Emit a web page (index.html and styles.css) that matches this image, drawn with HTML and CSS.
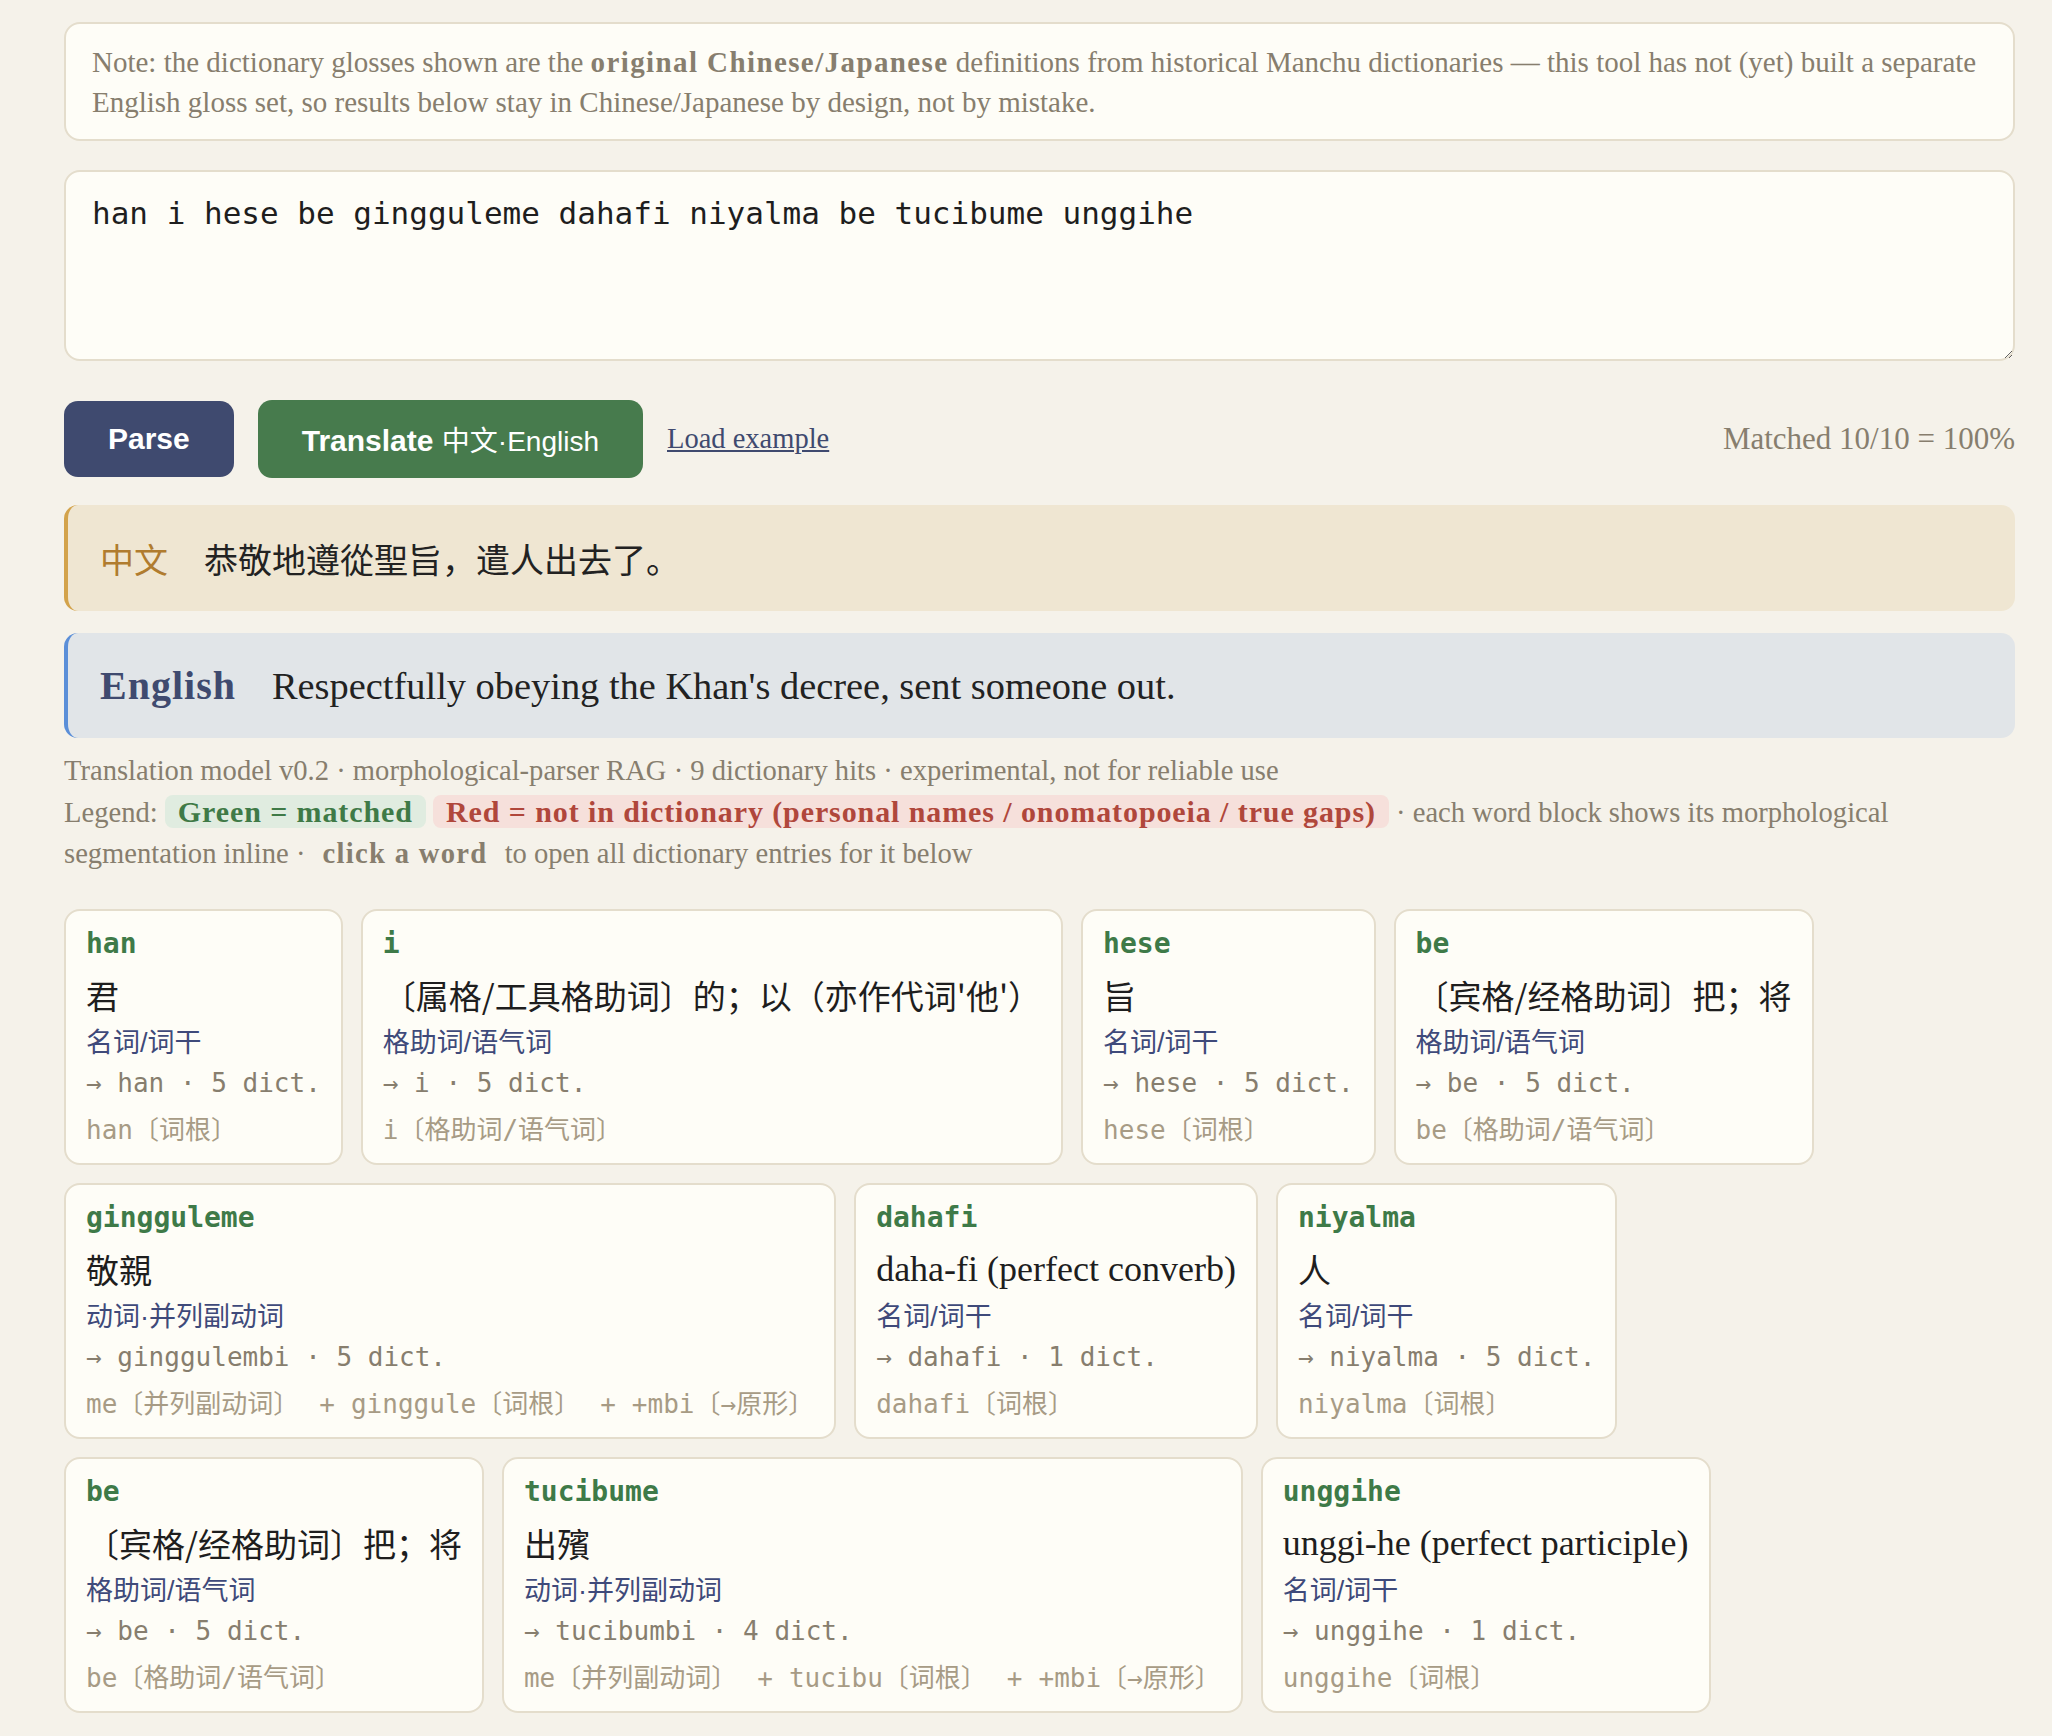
FILE: index.html
```html
<!DOCTYPE html>
<html lang="en">
<head>
	<meta charset="UTF-8">
	<title>Manchu parser</title>
	<link rel="stylesheet" href="styles.css">
</head>
<body>
	<div class="page">
		<div class="note">Note: the dictionary glosses shown are the <b>original Chinese/Japanese</b> definitions from historical Manchu dictionaries — this tool has not (yet) built a separate English gloss set, so results below stay in Chinese/Japanese by design, not by mistake.</div>
		<textarea class="input" spellcheck="false">han i hese be gingguleme dahafi niyalma be tucibume unggihe</textarea>
		<div class="actions">
			<button class="btn btn-parse">Parse</button>
			<button class="btn btn-translate">Translate <span class="sub">中文·English</span></button>
			<a href="#" class="load">Load example</a>
			<span class="matched">Matched 10/10 = 100%</span>
		</div>
		<div class="result result-zh"><span class="label">中文</span><span class="text">恭敬地遵從聖旨，遣人出去了。</span></div>
		<div class="result result-en"><span class="label">English</span><span class="text">Respectfully obeying the Khan's decree, sent someone out.</span></div>
		<div class="meta">Translation model v0.2 · morphological-parser RAG · 9 dictionary hits · experimental, not for reliable use</div>
		<div class="meta">Legend: <span class="pill pill-ok">Green = matched</span> <span class="pill pill-miss">Red = not in dictionary (personal names / onomatopoeia / true gaps)</span> · each word block shows its morphological segmentation inline · <b class="hint">click a word</b> to open all dictionary entries for it below</div>

		<div class="words">
			<div class="word">
				<div class="form">han</div>
				<div class="gloss zh">君</div>
				<div class="pos">名词/词干</div>
				<div class="lemma">→ han · 5 dict.</div>
				<div class="segs"><span class="seg">han〔词根〕</span></div>
			</div>
			<div class="word">
				<div class="form">i</div>
				<div class="gloss zh">〔属格/工具格助词〕的；以（亦作代词'他'）</div>
				<div class="pos">格助词/语气词</div>
				<div class="lemma">→ i · 5 dict.</div>
				<div class="segs"><span class="seg">i〔格助词/语气词〕</span></div>
			</div>
			<div class="word">
				<div class="form">hese</div>
				<div class="gloss zh">旨</div>
				<div class="pos">名词/词干</div>
				<div class="lemma">→ hese · 5 dict.</div>
				<div class="segs"><span class="seg">hese〔词根〕</span></div>
			</div>
			<div class="word">
				<div class="form">be</div>
				<div class="gloss zh">〔宾格/经格助词〕把；将</div>
				<div class="pos">格助词/语气词</div>
				<div class="lemma">→ be · 5 dict.</div>
				<div class="segs"><span class="seg">be〔格助词/语气词〕</span></div>
			</div>
			<div class="word">
				<div class="form">gingguleme</div>
				<div class="gloss zh">敬親</div>
				<div class="pos">动词·并列副动词</div>
				<div class="lemma">→ ginggulembi · 5 dict.</div>
				<div class="segs"><span class="seg">me〔并列副动词〕</span><span class="plus">+</span><span class="seg">ginggule〔词根〕</span><span class="plus">+</span><span class="seg">+mbi〔→原形〕</span></div>
			</div>
			<div class="word">
				<div class="form">dahafi</div>
				<div class="gloss">daha-fi (perfect converb)</div>
				<div class="pos">名词/词干</div>
				<div class="lemma">→ dahafi · 1 dict.</div>
				<div class="segs"><span class="seg">dahafi〔词根〕</span></div>
			</div>
			<div class="word">
				<div class="form">niyalma</div>
				<div class="gloss zh">人</div>
				<div class="pos">名词/词干</div>
				<div class="lemma">→ niyalma · 5 dict.</div>
				<div class="segs"><span class="seg">niyalma〔词根〕</span></div>
			</div>
			<div class="word">
				<div class="form">be</div>
				<div class="gloss zh">〔宾格/经格助词〕把；将</div>
				<div class="pos">格助词/语气词</div>
				<div class="lemma">→ be · 5 dict.</div>
				<div class="segs"><span class="seg">be〔格助词/语气词〕</span></div>
			</div>
			<div class="word">
				<div class="form">tucibume</div>
				<div class="gloss zh">出殯</div>
				<div class="pos">动词·并列副动词</div>
				<div class="lemma">→ tucibumbi · 4 dict.</div>
				<div class="segs"><span class="seg">me〔并列副动词〕</span><span class="plus">+</span><span class="seg">tucibu〔词根〕</span><span class="plus">+</span><span class="seg">+mbi〔→原形〕</span></div>
			</div>
			<div class="word">
				<div class="form">unggihe</div>
				<div class="gloss">unggi-he (perfect participle)</div>
				<div class="pos">名词/词干</div>
				<div class="lemma">→ unggihe · 1 dict.</div>
				<div class="segs"><span class="seg">unggihe〔词根〕</span></div>
			</div>
		</div>
	</div>
</body>
</html>
```

FILE: styles.css
```css
* {
	margin: 0;
	padding: 0;
	box-sizing: border-box;
}
body {
	background-color: #f5f2ea;
	font-family: "Liberation Serif", "Noto Sans CJK SC", serif;
	color: #222;
}
.page {
	padding: 22px 37px 26px 64px;
}
.note {
	background-color: #fefdf7;
	border: 2px solid #e4ddcc;
	border-radius: 16px;
	padding: 18px 26px 17px;
	font-size: 29px;
	line-height: 40px;
	color: #877e6e;
}
.note b {
	letter-spacing: 1.4px;
}
.input {
	display: block;
	width: 100%;
	height: 191px;
	margin-top: 29px;
	padding: 18px 26px;
	background-color: #fefdf7;
	border: 2px solid #e4ddcc;
	border-radius: 16px;
	font-family: "DejaVu Sans Mono", monospace;
	font-size: 31px;
	line-height: 1.5;
	color: #1e1e1e;
	outline: none;
}
.actions {
	display: flex;
	align-items: center;
	gap: 24px;
	margin-top: 39px;
}
.btn {
	height: 76px;
	padding: 0 44px;
	border: none;
	border-radius: 14px;
	color: #fff;
	font-family: "Liberation Sans", "Noto Sans CJK SC", sans-serif;
	font-size: 30px;
	font-weight: bold;
}
.btn-parse {
	background-color: #3f4a6f;
}
.btn-translate {
	background-color: #477b4d;
	height: 78px;
}
.btn .sub {
	font-size: 28px;
	font-weight: normal;
}
.load {
	color: #3f4a6f;
	font-size: 28.5px;
	text-decoration: underline;
}
.matched {
	margin-left: auto;
	color: #877e6e;
	font-size: 31px;
}
.result {
	display: flex;
	align-items: center;
	gap: 36px;
	border-radius: 14px;
	padding: 0 32px;
}
.result-zh {
	height: 106px;
	margin-top: 27px;
	background-color: #efe6d2;
	border-left: 4px solid #d3a34b;
	font-size: 34px;
}
.result-zh .label {
	color: #b07c2f;
}
.result-en {
	height: 105px;
	margin-top: 22px;
	background-color: #e1e5e8;
	border-left: 4px solid #5b8fd8;
	font-size: 38.4px;
}
.result-en .label {
	color: #3f4a6f;
	font-weight: bold;
	font-size: 40px;
	letter-spacing: 1px;
}
.meta {
	font-size: 28.6px;
	line-height: 41px;
	color: #877e6e;
}
.result-en + .meta {
	margin-top: 12px;
}
.pill {
	font-weight: bold;
	font-size: 30px;
	letter-spacing: 0.9px;
	padding: 0 13px;
	border-radius: 8px;
}
.pill-ok {
	background-color: #e0ece0;
	color: #3f7a47;
}
.pill-miss {
	background-color: #f6e0db;
	color: #b0473b;
}
.hint {
	padding: 0 10px;
	letter-spacing: 1.3px;
}
.words {
	display: flex;
	flex-wrap: wrap;
	align-items: flex-start;
	gap: 18px;
	margin-top: 35px;
}
.word {
	background-color: #fefdf7;
	border: 2px solid #e4ddcc;
	border-radius: 16px;
	padding: 16px 20px 16px;
	cursor: pointer;
}
.form {
	font-family: "DejaVu Sans Mono", monospace;
	font-weight: bold;
	font-size: 28px;
	line-height: 34px;
	color: #3e7a48;
}
.gloss {
	margin-top: 12px;
	font-size: 36px;
	line-height: 44px;
	color: #1e1e1e;
	white-space: nowrap;
}
.gloss.zh {
	font-family: "Noto Sans CJK SC", sans-serif;
	font-size: 33px;
}
.pos {
	margin-top: 8px;
	font-family: "Liberation Sans", "Noto Sans CJK SC", sans-serif;
	font-size: 27px;
	line-height: 36px;
	color: #3f4a7a;
}
.lemma {
	margin-top: 4px;
	font-family: "DejaVu Sans Mono", monospace;
	font-size: 26px;
	line-height: 36px;
	color: #877e6e;
	white-space: nowrap;
}
.segs {
	margin-top: 12px;
	font-family: "DejaVu Sans Mono", "Noto Sans CJK SC", monospace;
	font-size: 26px;
	line-height: 34px;
	color: #a79b85;
	white-space: nowrap;
}
.plus {
	padding: 0 16px 0 20px;
}
```
